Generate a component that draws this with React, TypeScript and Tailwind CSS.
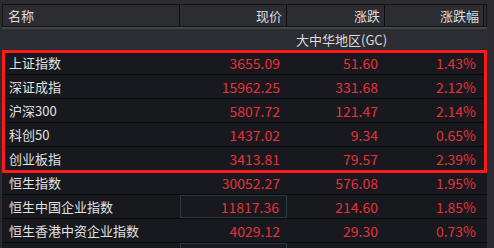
import React from "react";

const rows = [
  { name: "上证指数", price: "3655.09", chg: "51.60", pct: "1.43%" },
  { name: "深证成指", price: "15962.25", chg: "331.68", pct: "2.12%" },
  { name: "沪深300", price: "5807.72", chg: "121.47", pct: "2.14%" },
  { name: "科创50", price: "1437.02", chg: "9.34", pct: "0.65%" },
  { name: "创业板指", price: "3413.81", chg: "79.57", pct: "2.39%" },
  { name: "恒生指数", price: "30052.27", chg: "576.08", pct: "1.95%" },
  { name: "恒生中国企业指数", price: "11817.36", chg: "214.60", pct: "1.85%", boxed: true },
  { name: "恒生香港中资企业指数", price: "4029.12", chg: "29.30", pct: "0.73%" },
  { name: "", price: "", chg: "", pct: "", boxed: true },
];

export default function App() {
  return (
    <div
      className="w-[494px] h-[248px] overflow-hidden bg-[#2b2b31] pt-[4px] pl-[2px] relative"
      style={{ fontFamily: '"Microsoft YaHei", "Noto Sans CJK SC", "Noto Sans", sans-serif' }}
    >
      <div className="w-[485px]">
        {/* header */}
        <div className="flex h-[23px] border border-[#141417] bg-[#2c2c33] text-[13px] text-[#dedede] leading-none">
          <div className="w-[177px] flex items-center pl-[5px] border-r border-[#0e0e10]">名称</div>
          <div className="w-[107px] flex items-center justify-end pr-[4px] border-r border-[#0e0e10]">现价</div>
          <div className="w-[98px] flex items-center justify-end pr-[4px] border-r border-[#0e0e10]">涨跌</div>
          <div className="w-[99px] flex items-center justify-end pr-[4px] border-r border-[#0e0e10]">涨跌幅</div>
        </div>
        <div className="h-[2px] bg-[#44444b]" />
        {/* group row */}
        <div className="h-[21px] flex items-center pl-[294px] text-[13px] text-[#dedede] leading-none bg-[#2c2c33]">
          大中华地区(GC)
        </div>
        {/* data rows */}
        <div className="relative bg-[#0c0c0e] pt-[1px]">
          {rows.map((r, i) => (
            <div
              key={i}
              className="flex h-[24px] border-b border-[#0a0a0c] bg-[#17191e] text-[14px] leading-none"
            >
              <div className="w-[178px] flex items-center pl-[7px] text-[13px] text-[#e2e2e2]">{r.name}</div>
              <div
                className={
                  "w-[107px] flex items-center justify-end pr-[7px] text-[#e8303a] " +
                  (r.boxed ? "border border-[#263a40]" : "")
                }
              >
                {r.price}
              </div>
              <div className="w-[98px] flex items-center justify-end pr-[7px] text-[#e8303a]">{r.chg}</div>
              <div className="w-[99px] flex items-center justify-end pr-[8px] text-[#e8303a]">{r.pct}</div>
            </div>
          ))}
          <div className="absolute left-0 top-0 w-[485px] h-[123px] border-[3px] border-[#ff1a1a] pointer-events-none" />
        </div>
      </div>
    </div>
  );
}
